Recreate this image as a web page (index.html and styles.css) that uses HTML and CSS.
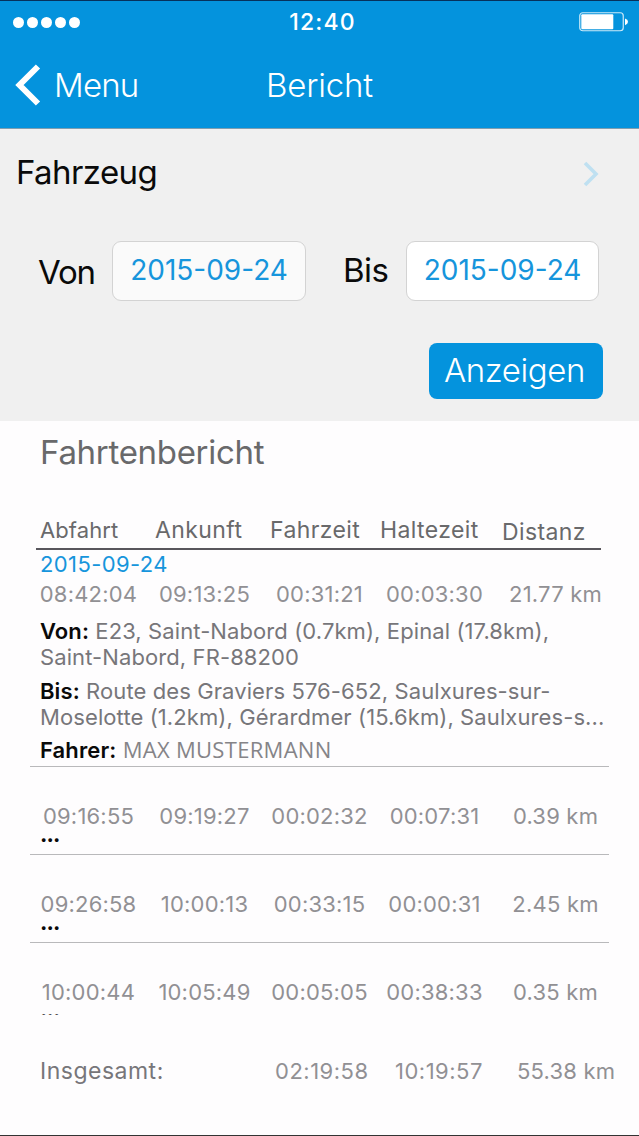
FILE: index.html
```
<!DOCTYPE html>
<html lang="de">
<head>
  <meta charset="UTF-8">
  <title>Bericht</title>
  <link rel="stylesheet" href="styles.css">
</head>
<body>

  <div class="screen">
    <header class="header">
      <div class="status-bar">
        <div class="signal"><i></i><i></i><i></i><i></i><i></i></div>
        <span class="clock">12:40</span>
        <svg class="battery" width="50" height="20" viewBox="0 0 50 20">
          <rect x="0.75" y="0.75" width="43.5" height="18" rx="3" fill="none" stroke="#fff" stroke-opacity="0.8" stroke-width="1.2"/>
          <rect x="2.3" y="2.3" width="32" height="15" rx="1" fill="#fff"/>
          <path d="M46 6.5 Q49 7.5 49 9.8 Q49 12 46 13.2 Z" fill="#fff"/>
        </svg>
      </div>
      <div class="nav">
        <a class="back" href="#">
          <svg width="26" height="42" viewBox="0 0 26 42">
            <path d="M23 2.5 L4.5 21 L23 39.5" fill="none" stroke="#fff" stroke-width="6"/>
          </svg>
          <span class="back-text">Menu</span>
        </a>
        <h1 class="title">Bericht</h1>
      </div>
    </header>

    <section class="filter">
      <div class="vehicle">
        <span class="vehicle-text">Fahrzeug</span>
        <svg class="arrow" width="16" height="26" viewBox="0 0 16 26">
          <path d="M2 2 L13 13 L2 24" fill="none" stroke="#bfe0f1" stroke-width="3.6"/>
        </svg>
      </div>
      <div class="dates">
        <label class="label-von">Von</label>
        <div class="date-box">2015-09-24</div>
        <label class="label-bis">Bis</label>
        <div class="date-box white">2015-09-24</div>
      </div>
      <button class="show-btn">Anzeigen</button>
    </section>

    <section class="report">
      <h2 class="report-title">Fahrtenbericht</h2>

      <div class="table-head">
        <span class="abfahrt">Abfahrt</span>
        <span>Ankunft</span>
        <span>Fahrzeit</span>
        <span>Haltezeit</span>
        <span class="distanz">Distanz</span>
      </div>

      <div class="trip first">
        <div class="day">2015-09-24</div>
        <div class="times">
          <span>08:42:04</span><span>09:13:25</span><span>00:31:21</span><span>00:03:30</span><span>21.77 km</span>
        </div>
        <p class="place"><b>Von:</b> E23, Saint-Nabord (0.7km), Epinal (17.8km),<br>Saint-Nabord, FR-88200</p>
        <p class="place to"><b>Bis:</b> Route des Graviers 576-652, Saulxures-sur-<br>Moselotte (1.2km), Gérardmer (15.6km), Saulxures-s...</p>
        <p class="place driver"><b>Fahrer:</b> <span class="driver-name">MAX MUSTERMANN</span></p>
      </div>

      <div class="trip">
        <div class="times">
          <span>09:16:55</span><span>09:19:27</span><span>00:02:32</span><span>00:07:31</span><span>0.39 km</span>
        </div>
        <div class="more">...</div>
      </div>

      <div class="trip">
        <div class="times">
          <span>09:26:58</span><span>10:00:13</span><span>00:33:15</span><span>00:00:31</span><span>2.45 km</span>
        </div>
        <div class="more">...</div>
      </div>

      <div class="trip last">
        <div class="times">
          <span>10:00:44</span><span>10:05:49</span><span>00:05:05</span><span>00:38:33</span><span>0.35 km</span>
        </div>
        <div class="more">...</div>
      </div>

      <div class="total">
        <span class="total-label">Insgesamt:</span>
        <span>02:19:58</span>
        <span>10:19:57</span>
        <span class="total-km">55.38 km</span>
      </div>
    </section>
  </div>

</body>
</html>
```

FILE: styles.css
```
* {
  box-sizing: border-box;
}

body {
  margin: 0;
  font-family: Inter, "Liberation Sans", sans-serif;
  background: #fefdfe;
}

.screen {
  width: 639px;
  height: 1136px;
  border-top: 1px solid #06315c;
  border-bottom: 1px solid #333;
  overflow: hidden;
}

h1, h2, p {
  margin: 0;
  font-weight: 400;
}

/* header */
.header {
  height: 128px;
  background: #0493dd;
  border-bottom: 1px solid #7f9eb0;
  color: #fff;
}

.status-bar {
  display: grid;
  grid-template-columns: 1fr auto 1fr;
  align-items: center;
  height: 42px;
  padding: 0 10px 0 13px;
}

.signal {
  display: flex;
  gap: 3px;
}

.signal i {
  width: 11px;
  height: 11px;
  border-radius: 50%;
  background: #fff;
}

.clock {
  padding-left: 3px;
  font-size: 23px;
  font-weight: 500;
  letter-spacing: 1.2px;
}

.battery {
  justify-self: end;
}

.nav {
  display: grid;
  grid-template-columns: 1fr auto 1fr;
  align-items: center;
  height: 83px;
}

.back {
  display: flex;
  align-items: center;
  gap: 13px;
  padding-left: 15px;
  color: #fff;
  text-decoration: none;
}

.back-text,
.title {
  font-size: 33px;
  font-weight: 350;
  line-height: 42px;
  letter-spacing: -0.8px;
}

.title {
  letter-spacing: -0.2px;
}

/* filter */
.filter {
  height: 292px;
  padding: 18px 36px 0 16px;
  background: #f0f0f0;
}

.vehicle {
  display: flex;
  justify-content: space-between;
  align-items: center;
  height: 50px;
  padding-right: 4px;
}

.arrow {
  margin-top: 3px;
}

.vehicle-text,
.label-von,
.label-bis {
  font-size: 33px;
  letter-spacing: -0.6px;
  color: #0a0a0a;
}

.dates {
  display: grid;
  grid-template-columns: 74px 194px 100px 193px;
  align-items: center;
  height: 60px;
  margin-top: 44px;
  padding-left: 22px;
}

.label-von {
  padding-top: 1px;
  letter-spacing: -1.2px;
}

.label-bis {
  padding: 0 0 2px 37px;
}

.date-box {
  height: 60px;
  border: 1px solid #d3d3d3;
  border-radius: 9px;
  background: #fafafa;
  color: #1695dc;
  font-size: 28px;
  line-height: 57px;
  text-align: center;
}

.date-box.white {
  background: #fff;
}

.show-btn {
  display: block;
  width: 174px;
  height: 56px;
  margin: 42px 0 0 auto;
  padding: 0 3px 3px 0;
  border: none;
  border-radius: 8px;
  background: #0493dd;
  color: #fff;
  font-family: inherit;
  font-size: 33px;
  font-weight: 350;
  letter-spacing: -0.4px;
}

/* report */
.report {
  padding: 0 30px;
  font-size: 22px;
  letter-spacing: 0.1px;
  color: #77767a;
}

.report-title {
  padding-left: 10px;
  color: #69696b;
  font-size: 33px;
  line-height: 62px;
  letter-spacing: -0.3px;
}

.table-head {
  display: grid;
  grid-template-columns: 115px 115px 110px 122px auto;
  height: 67px;
  margin: 0 8px 0 6px;
  padding: 33px 0 0 4px;
  border-bottom: 2px solid #58565c;
  color: #69696b;
  font-size: 23px;
  line-height: 28px;
  letter-spacing: 0.4px;
}

.table-head .abfahrt {
  font-size: 22px;
  letter-spacing: 0.1px;
}

.table-head .distanz {
  padding-top: 2px;
}

.trip {
  height: 88px;
  padding-top: 34px;
  border-bottom: 1px solid #b9b9bb;
}

.trip.first {
  height: 217px;
  padding-top: 0;
}

.trip.last {
  border-bottom: none;
}

.day {
  padding-left: 10px;
  color: #1695dc;
  line-height: 29px;
  letter-spacing: 0.4px;
}

.times {
  display: grid;
  grid-template-columns: 117px 115px 115px 115px 127px;
  color: #919094;
  line-height: 30px;
  letter-spacing: 0.2px;
  text-align: center;
}

.place {
  margin-top: 8px;
  padding-left: 10px;
  line-height: 26px;
  white-space: nowrap;
}

.first .times + .place {
  margin-top: 9px;
}

.place.driver {
  margin-top: 6px;
}

.driver-name {
  font-family: "Open Sans", sans-serif;
  letter-spacing: 0.3px;
  color: #858488;
}

.place b {
  color: #0a0a0a;
  font-weight: 600;
}

.more {
  height: 15px;
  padding-left: 10px;
  color: #0a0a0a;
  font-weight: 700;
  line-height: 6px;
  letter-spacing: -0.9px;
}

.last .more {
  height: 8px;
  overflow: hidden;
}

.total {
  display: grid;
  grid-template-columns: 235px 120px 122px 130px;
  margin: 25px -20px 0 0;
  padding-left: 10px;
  color: #919094;
  line-height: 30px;
  letter-spacing: 0.5px;
}

.total-label {
  color: #77767a;
  font-size: 23px;
}

.total-km {
  letter-spacing: 0.2px;
}
```
